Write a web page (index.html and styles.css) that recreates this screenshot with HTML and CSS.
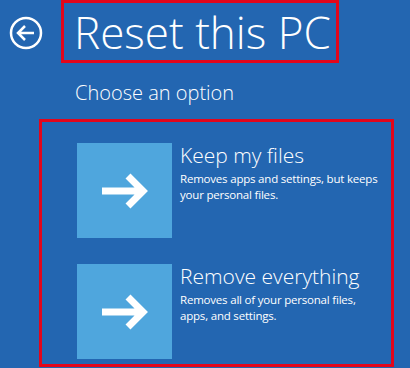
FILE: index.html
```html
<!DOCTYPE html>
<html lang="en">
<head>
    <meta charset="UTF-8">
    <meta name="viewport" content="width=device-width, initial-scale=1.0">
    <title>Reset this PC</title>
    <link rel="stylesheet" href="styles.css">
</head>
<body>

<div class="screen">
    <div class="header">
        <!-- Back button -->
        <svg class="back-btn" width="34" height="34" viewBox="0 0 34 34" xmlns="http://www.w3.org/2000/svg">
            <circle cx="17" cy="17" r="15" stroke="white" stroke-width="2.5" fill="none" />
            <path d="M 9 17 L 25 17 M 16 10 L 9 17 L 16 24" stroke="white" stroke-width="2.5" fill="none" stroke-linejoin="miter" />
        </svg>
        <div class="title-box">
            <h1 class="title">Reset this PC</h1>
        </div>
    </div>

    <p class="subtitle">Choose an option</p>

    <div class="options">
        <div class="option">
            <div class="tile">
                <svg width="46" height="36" viewBox="0 0 46 36" xmlns="http://www.w3.org/2000/svg">
                    <path d="M 0 18 L 41 18 M 26 3 L 41 18 L 26 33" stroke="white" stroke-width="7" fill="none" />
                </svg>
            </div>
            <div class="option-text">
                <div class="option-title">Keep my files</div>
                <div class="option-desc">Removes apps and settings, but keeps<br>your personal files.</div>
            </div>
        </div>

        <div class="option">
            <div class="tile">
                <svg width="46" height="36" viewBox="0 0 46 36" xmlns="http://www.w3.org/2000/svg">
                    <path d="M 0 18 L 41 18 M 26 3 L 41 18 L 26 33" stroke="white" stroke-width="7" fill="none" />
                </svg>
            </div>
            <div class="option-text">
                <div class="option-title">Remove everything</div>
                <div class="option-desc">Removes all of your personal files,<br>apps, and settings.</div>
            </div>
        </div>
    </div>
</div>

</body>
</html>
```

FILE: styles.css
```css
body {
    margin: 0;
    background-color: #2366b1;
    color: #ffffff;
    font-family: "Open Sans", "Noto Sans", sans-serif;
    overflow: hidden;
}
.screen {
    width: 410px;
    height: 368px;
}
.header {
    display: flex;
    align-items: center;
    height: 63px;
}
.back-btn {
    margin-left: 9px;
    margin-right: 18px;
    margin-top: 2px;
}
.title-box {
    box-sizing: border-box;
    width: 278px;
    height: 63px;
    border: 3px solid #e3061b;
    padding-left: 10px;
    display: flex;
    align-items: center;
}
.title {
    margin: 0;
    font-size: 44px;
    font-weight: 300;
    line-height: 1;
    white-space: nowrap;
}
.subtitle {
    margin: 18px 0 0 75px;
    font-size: 20px;
    font-weight: 300;
    line-height: 24px;
}
.options {
    box-sizing: border-box;
    width: 355px;
    height: 248px;
    margin: 14px 0 0 39px;
    border: 3px solid #e3061b;
    padding: 21px 0 0 35px;
    display: flex;
    flex-direction: column;
    gap: 26px;
}
.option {
    display: flex;
    gap: 8px;
}
.tile {
    width: 95px;
    height: 95px;
    flex-shrink: 0;
    background-color: #4fa6dd;
    display: flex;
    align-items: center;
    justify-content: center;
}
.option-text {
    width: 212px;
}
.option-title {
    font-size: 21px;
    font-weight: 300;
    line-height: 24px;
    white-space: nowrap;
}
.option-desc {
    margin-top: 4px;
    font-size: 11.5px;
    letter-spacing: -0.2px;
    line-height: 16px;
    white-space: nowrap;
}
```
